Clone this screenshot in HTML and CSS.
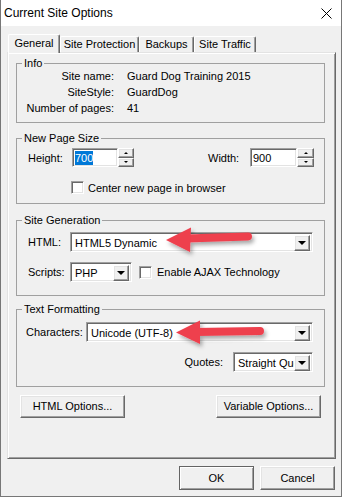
FILE: index.html
```html
<!DOCTYPE html>
<html lang="en">
<head>
  <meta charset="UTF-8">
  <meta name="viewport" content="width=device-width, initial-scale=1.0">
  <title>Current Site Options</title>
  <link rel="stylesheet" href="styles.css">
</head>
<body>
  <div class="window">
    <div class="titlebar">
      <span class="title">Current Site Options</span>
      <svg class="close" width="11" height="11" viewBox="0 0 11 11">
        <path d="M0.5 0.5L10.5 10.5M10.5 0.5L0.5 10.5" stroke="#000" stroke-width="1" fill="none"/>
      </svg>
    </div>

    <div class="client">
      <div class="tabs">
        <div class="tab active tab-general">General</div>
        <div class="tab tab-protection">Site Protection</div>
        <div class="tab tab-backups">Backups</div>
        <div class="tab tab-traffic">Site Traffic</div>
      </div>

      <div class="panel">
        <fieldset class="group group-info">
          <legend>Info</legend>
          <div class="info-grid">
            <span class="info-label">Site name:</span><span>Guard Dog Training 2015</span>
            <span class="info-label">SiteStyle:</span><span>GuardDog</span>
            <span class="info-label">Number of pages:</span><span>41</span>
          </div>
        </fieldset>

        <fieldset class="group group-size">
          <legend>New Page Size</legend>
          <div class="row size-row">
            <span class="lbl lbl-height">Height:</span>
            <div class="spin-field">
              <div class="edit edit-height"><span class="sel">700</span></div>
              <div class="spinner"><span class="spin-btn up"></span><span class="spin-btn down"></span></div>
            </div>
            <span class="lbl lbl-width">Width:</span>
            <div class="spin-field">
              <div class="edit edit-width">900</div>
              <div class="spinner spinner-wide"><span class="spin-btn up"></span><span class="spin-btn down"></span></div>
            </div>
          </div>
          <div class="row check-row">
            <span class="checkbox"></span>
            <span class="check-text">Center new page in browser</span>
          </div>
        </fieldset>

        <fieldset class="group group-gen">
          <legend>Site Generation</legend>
          <div class="row html-row">
            <span class="lbl lbl-html">HTML:</span>
            <div class="combo combo-html">
              <span class="combo-text">HTML5 Dynamic</span>
              <span class="drop"></span>
            </div>
          </div>
          <div class="row scripts-row">
            <span class="lbl lbl-scripts">Scripts:</span>
            <div class="combo combo-scripts">
              <span class="combo-text">PHP</span>
              <span class="drop"></span>
            </div>
            <span class="checkbox checkbox-ajax"></span>
            <span class="check-text">Enable AJAX Technology</span>
          </div>
        </fieldset>

        <fieldset class="group group-text">
          <legend>Text Formatting</legend>
          <div class="row chars-row">
            <span class="lbl lbl-chars">Characters:</span>
            <div class="combo combo-chars">
              <span class="combo-text">Unicode (UTF-8)</span>
              <span class="drop"></span>
            </div>
          </div>
          <div class="row quotes-row">
            <span class="lbl lbl-quotes">Quotes:</span>
            <div class="combo combo-quotes">
              <span class="combo-text">Straight Quotes</span>
              <span class="drop"></span>
            </div>
          </div>
        </fieldset>

        <div class="panel-buttons">
          <div class="button wide">HTML Options...</div>
          <div class="button wide">Variable Options...</div>
        </div>
      </div>

      <div class="footer">
        <div class="button default">OK</div>
        <div class="button">Cancel</div>
      </div>
    </div>

    <!-- callout arrows drawn over the dialog -->
    <svg class="arrows" width="342" height="497" viewBox="0 0 342 497">
      <defs>
        <filter id="shadow" x="-20%" y="-40%" width="140%" height="200%">
          <feDropShadow dx="2" dy="3" stdDeviation="2" flood-color="#000" flood-opacity="0.35"/>
        </filter>
      </defs>
      <g filter="url(#shadow)">
        <line x1="186" y1="238.5" x2="248" y2="236.5" stroke="#ee3f4e" stroke-width="8" stroke-linecap="round"/>
        <polygon points="166,240 191,227.5 190,252" fill="#ee3f4e"/>
      </g>
      <g filter="url(#shadow)">
        <line x1="196" y1="332" x2="260" y2="331" stroke="#ee3f4e" stroke-width="8" stroke-linecap="round"/>
        <polygon points="176,332.5 200,320.5 200,344" fill="#ee3f4e"/>
      </g>
    </svg>
  </div>
</body>
</html>
```

FILE: styles.css
```css
* {
  box-sizing: border-box;
}
body {
  margin: 0;
  font-family: "Liberation Sans", Arial, sans-serif;
  font-size: 11px;
  color: #000;
  background-color: #f0f0f0;
}
.window {
  position: relative;
  width: 342px;
  height: 497px;
  border: 1px solid #777;
  border-top: none;
  background-color: #f0f0f0;
}
.titlebar {
  display: flex;
  justify-content: space-between;
  height: 26px;
  padding: 0 9px 0 3px;
  background-color: #fff;
}
.title {
  font-size: 12px;
  line-height: 26px;
}
.close {
  margin-top: 8px;
}

/* tabs */
.tabs {
  display: flex;
  align-items: flex-end;
  height: 26px;
  padding-left: 7px;
}
.tab {
  height: 16px;
  line-height: 15px;
  text-align: center;
  background-color: #f0f0f0;
  border-top: 1px solid #fff;
  border-left: 1px solid #fff;
  border-right: 1px solid #696969;
  box-shadow: inset -1px 0 #a0a0a0;
  border-radius: 2px 2px 0 0;
}
.tab.active {
  position: relative;
  z-index: 1;
  height: 19px;
  line-height: 16px;
  margin-bottom: -1px;
}
.tab-general { width: 52px; }
.tab-protection { width: 79px; }
.tab-backups { width: 55px; }
.tab-traffic { width: 62px; }

.panel {
  position: relative;
  width: 329px;
  height: 407px;
  margin-left: 6px;
  border: 1px solid;
  border-color: #e3e3e3 #696969 #696969 #e3e3e3;
  box-shadow: inset 1px 1px #fff, inset -1px -1px #a0a0a0;
}

/* group boxes */
.group {
  width: 309px;
  margin: 0 0 0 8px;
  padding: 0;
  border: 1px solid #a0a0a0;
  min-width: 0;
}
.group legend {
  margin-left: 5px;
  padding: 0 2px;
  height: 12px;
  line-height: 12px;
}
.group-info { margin-top: 4px; padding-bottom: 6px; }
.group-size { margin-top: 9px; padding-bottom: 9px; }
.group-gen { margin-top: 10px; padding-bottom: 13px; }
.group-text { margin-top: 7px; padding-bottom: 14px; }

.info-grid {
  display: grid;
  grid-template-columns: 97px 1fr;
  column-gap: 13px;
  line-height: 16px;
  margin-top: -1px;
}
.info-label {
  text-align: right;
}

.row {
  display: flex;
  align-items: center;
}
.lbl {
  flex: none;
}
.size-row { margin-top: 4px; padding-left: 11px; }
.lbl-height { width: 44px; }
.lbl-width { width: 42px; margin-left: 74px; }
.check-row { margin-top: 14px; padding-left: 54px; }
.check-text { margin-left: 4px; }

.html-row { margin-top: 6px; padding-left: 11px; }
.lbl-html { width: 42px; }
.scripts-row { margin-top: 10px; padding-left: 11px; }
.lbl-scripts { width: 42px; }
.checkbox-ajax { margin-left: 7px; }
.scripts-row .check-text { margin-left: 5px; }

.chars-row { margin-top: 7px; padding-left: 9px; }
.lbl-chars { width: 60px; }
.quotes-row { margin-top: 10px; padding-right: 11px; justify-content: flex-end; }
.lbl-quotes { margin-right: 10px; }

/* sunken controls */
.edit,
.combo,
.checkbox {
  background-color: #fff;
  border: 1px solid;
  border-color: #a0a0a0 #fff #fff #a0a0a0;
  box-shadow: inset 1px 1px #696969, inset -1px -1px #e3e3e3;
}
.spin-field {
  display: flex;
}
.edit {
  height: 19px;
  padding: 2px 0 0 2px;
  line-height: 14px;
}
.edit-height { width: 46px; }
.edit-width { width: 47px; }
.sel {
  display: inline-block;
  background-color: #0078d7;
  color: #fff;
}
.spinner {
  display: flex;
  flex-direction: column;
  width: 16px;
  height: 19px;
}
.spinner-wide { width: 17px; }
.spin-btn,
.drop,
.button {
  position: relative;
  background-color: #f0f0f0;
  border: 1px solid;
  border-color: #fff #696969 #696969 #fff;
  box-shadow: inset -1px -1px #a0a0a0, inset 1px 1px #e3e3e3;
}
.spin-btn {
  flex: 1;
}
.spin-btn::after {
  content: "";
  position: absolute;
  left: 50%;
  top: 50%;
  margin: -1px 0 0 -2px;
  border-left: 2px solid transparent;
  border-right: 2px solid transparent;
}
.spin-btn.up::after { border-bottom: 2px solid #000; }
.spin-btn.down::after { border-top: 2px solid #000; }

.checkbox {
  width: 13px;
  height: 13px;
  flex: none;
}

.combo {
  display: flex;
  height: 20px;
  padding: 2px;
}
.combo-text {
  flex: 1;
  min-width: 0;
  padding-left: 2px;
  line-height: 16px;
  white-space: nowrap;
  overflow: hidden;
}
.drop {
  flex: none;
  width: 16px;
  height: 16px;
}
.drop::after {
  content: "";
  position: absolute;
  left: 3px;
  top: 5px;
  border-left: 4px solid transparent;
  border-right: 4px solid transparent;
  border-top: 4px solid #000;
}
.combo-html { width: 243px; }
.combo-scripts { width: 62px; }
.combo-chars { width: 227px; }
.combo-quotes { width: 80px; }

/* push buttons */
.button {
  width: 75px;
  height: 24px;
  line-height: 22px;
  text-align: center;
}
.button.wide {
  width: 105px;
  height: 23px;
  line-height: 21px;
}
.button.default {
  outline: 1px solid #646464;
  outline-offset: -1px;
  border-color: #646464;
  box-shadow: inset 1px 1px #fff, inset -1px -1px #a0a0a0;
}
.panel-buttons {
  display: flex;
  justify-content: space-between;
  margin-top: 8px;
  padding: 0 14px 0 12px;
}
.footer {
  display: flex;
  justify-content: flex-end;
  gap: 6px;
  padding: 7px 6px 0 0;
}

.arrows {
  position: absolute;
  left: -1px;
  top: 0;
  pointer-events: none;
}
```
